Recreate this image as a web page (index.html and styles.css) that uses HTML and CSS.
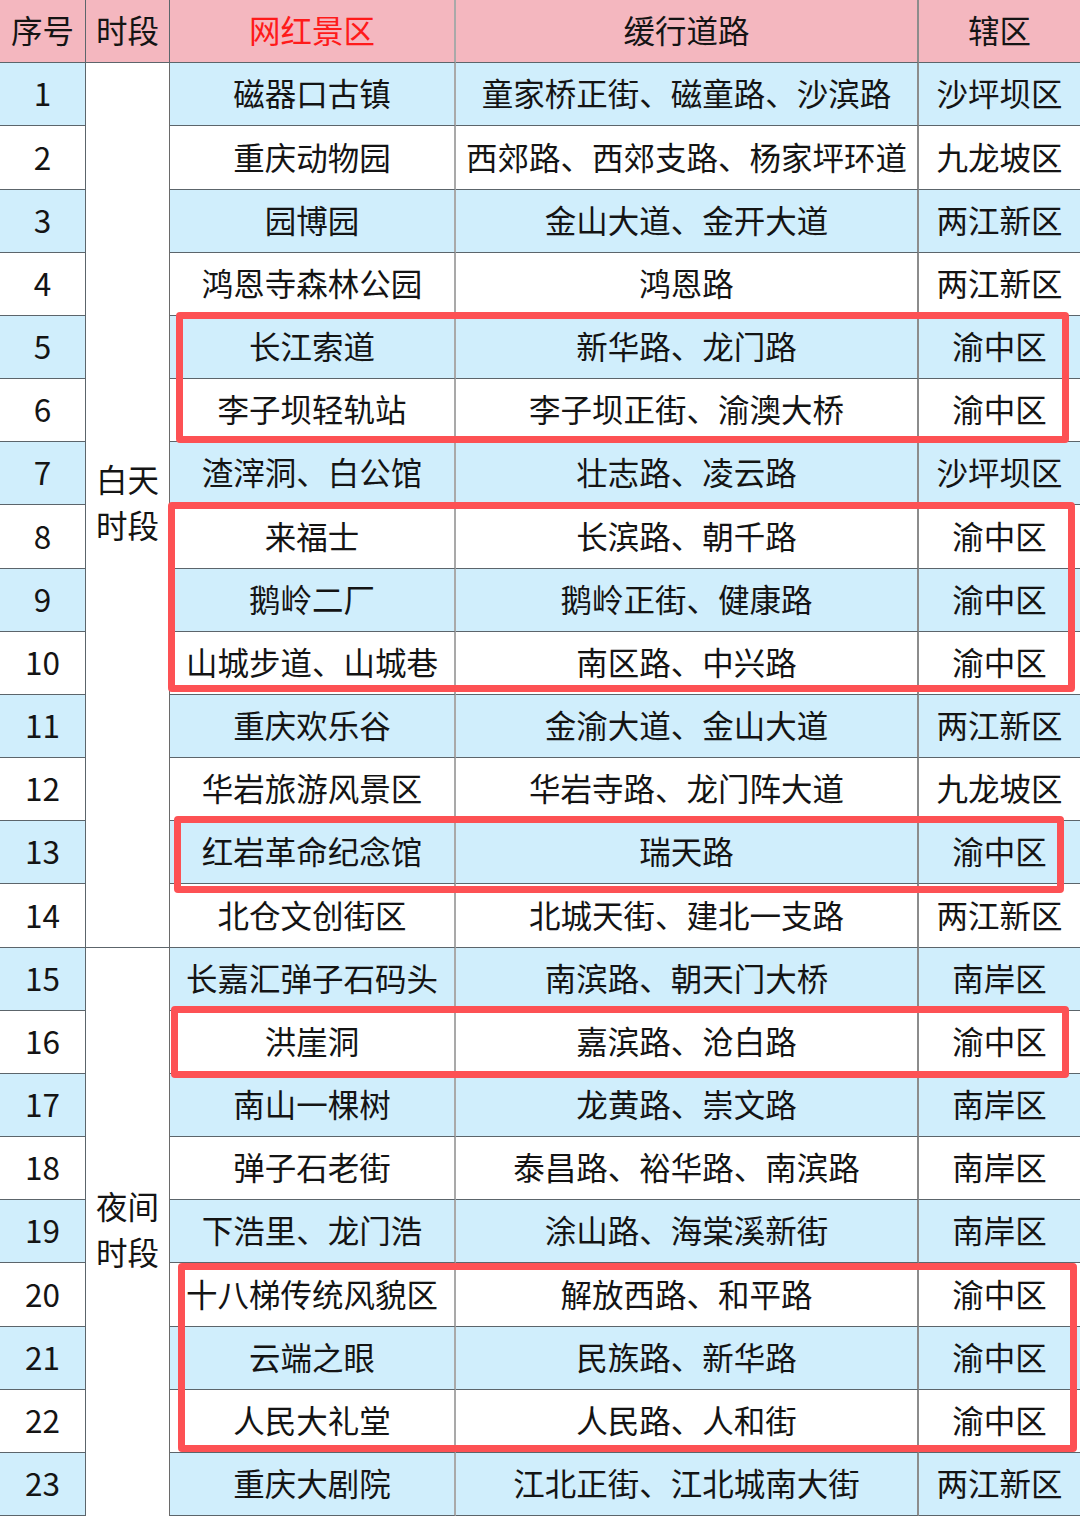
FILE: index.html
```html
<!DOCTYPE html>
<html lang="zh-CN">
<head>
<meta charset="utf-8">
<link rel="stylesheet" href="styles.css">
</head>
<body>
<div class="wrap">
  <div class="grid">
    <div class="cell head">序号</div>
    <div class="cell head">时段</div>
    <div class="cell head c3 red">网红景区</div>
    <div class="cell head c4">缓行道路</div>
    <div class="cell head c5">辖区</div>

    <div class="cell period day">白天<br>时段</div>
    <div class="cell period night">夜间<br>时段</div>

    <div class="cell b">1</div><div class="cell b c3">磁器口古镇</div><div class="cell b c4">童家桥正街、磁童路、沙滨路</div><div class="cell b c5">沙坪坝区</div>
    <div class="cell">2</div><div class="cell c3">重庆动物园</div><div class="cell c4">西郊路、西郊支路、杨家坪环道</div><div class="cell c5">九龙坡区</div>
    <div class="cell b">3</div><div class="cell b c3">园博园</div><div class="cell b c4">金山大道、金开大道</div><div class="cell b c5">两江新区</div>
    <div class="cell">4</div><div class="cell c3">鸿恩寺森林公园</div><div class="cell c4">鸿恩路</div><div class="cell c5">两江新区</div>
    <div class="cell b">5</div><div class="cell b c3">长江索道</div><div class="cell b c4">新华路、龙门路</div><div class="cell b c5">渝中区</div>
    <div class="cell">6</div><div class="cell c3">李子坝轻轨站</div><div class="cell c4">李子坝正街、渝澳大桥</div><div class="cell c5">渝中区</div>
    <div class="cell b">7</div><div class="cell b c3">渣滓洞、白公馆</div><div class="cell b c4">壮志路、凌云路</div><div class="cell b c5">沙坪坝区</div>
    <div class="cell">8</div><div class="cell c3">来福士</div><div class="cell c4">长滨路、朝千路</div><div class="cell c5">渝中区</div>
    <div class="cell b">9</div><div class="cell b c3">鹅岭二厂</div><div class="cell b c4">鹅岭正街、健康路</div><div class="cell b c5">渝中区</div>
    <div class="cell">10</div><div class="cell c3">山城步道、山城巷</div><div class="cell c4">南区路、中兴路</div><div class="cell c5">渝中区</div>
    <div class="cell b">11</div><div class="cell b c3">重庆欢乐谷</div><div class="cell b c4">金渝大道、金山大道</div><div class="cell b c5">两江新区</div>
    <div class="cell">12</div><div class="cell c3">华岩旅游风景区</div><div class="cell c4">华岩寺路、龙门阵大道</div><div class="cell c5">九龙坡区</div>
    <div class="cell b">13</div><div class="cell b c3">红岩革命纪念馆</div><div class="cell b c4">瑞天路</div><div class="cell b c5">渝中区</div>
    <div class="cell">14</div><div class="cell c3">北仓文创街区</div><div class="cell c4">北城天街、建北一支路</div><div class="cell c5">两江新区</div>
    <div class="cell b">15</div><div class="cell b c3">长嘉汇弹子石码头</div><div class="cell b c4">南滨路、朝天门大桥</div><div class="cell b c5">南岸区</div>
    <div class="cell">16</div><div class="cell c3">洪崖洞</div><div class="cell c4">嘉滨路、沧白路</div><div class="cell c5">渝中区</div>
    <div class="cell b">17</div><div class="cell b c3">南山一棵树</div><div class="cell b c4">龙黄路、崇文路</div><div class="cell b c5">南岸区</div>
    <div class="cell">18</div><div class="cell c3">弹子石老街</div><div class="cell c4">泰昌路、裕华路、南滨路</div><div class="cell c5">南岸区</div>
    <div class="cell b">19</div><div class="cell b c3">下浩里、龙门浩</div><div class="cell b c4">涂山路、海棠溪新街</div><div class="cell b c5">南岸区</div>
    <div class="cell">20</div><div class="cell c3">十八梯传统风貌区</div><div class="cell c4">解放西路、和平路</div><div class="cell c5">渝中区</div>
    <div class="cell b">21</div><div class="cell b c3">云端之眼</div><div class="cell b c4">民族路、新华路</div><div class="cell b c5">渝中区</div>
    <div class="cell">22</div><div class="cell c3">人民大礼堂</div><div class="cell c4">人民路、人和街</div><div class="cell c5">渝中区</div>
    <div class="cell b">23</div><div class="cell b c3">重庆大剧院</div><div class="cell b c4">江北正街、江北城南大街</div><div class="cell b c5">两江新区</div>
  </div>

  <div class="hl hl1"></div>
  <div class="hl hl2"></div>
  <div class="hl hl3"></div>
  <div class="hl hl4"></div>
  <div class="hl hl5"></div>
</div>
</body>
</html>
```

FILE: styles.css
```css
html, body {
  margin: 0;
  padding: 0;
  background: #ffffff;
}

.wrap {
  position: relative;
  width: 1080px;
  height: 1516px;
  overflow: hidden;
}

.grid {
  display: grid;
  grid-template-columns: 86px 84px 286px 463px 161px;
  grid-template-rows: repeat(24, 1fr);
  height: 1516px;
  font-family: "Noto Sans CJK SC", "Noto Sans", sans-serif;
  font-size: 31.5px;
  color: #141414;
}

.cell {
  box-sizing: border-box;
  display: flex;
  align-items: center;
  justify-content: center;
  white-space: nowrap;
  background: #ffffff;
  border-bottom: 1px solid #5c656b;
  border-right: 1px solid #5c656b;
  line-height: 1;
  padding-bottom: 2px;
}

.cell.b {
  background: #d0eefc;
}

.cell.head {
  background: #f4b7bf;
}

.cell.red {
  color: #ff1a1a;
}

.cell.c3 {
  border-right: 2px solid #a9a9a9;
}

.cell.c4 {
  border-right: 2px solid #8c8c8c;
}

.cell.c5 {
  border-right: 0;
}

.period {
  grid-column: 2;
  background: #ffffff;
  line-height: 1.45;
  text-align: left;
  padding: 0 0 6px 10px;
  justify-content: flex-start;
  border-right: 1px solid #6a6a6a;
}

.period.day {
  grid-row: 2 / span 14;
}

.period.night {
  grid-row: 16 / span 9;
  border-bottom: 0;
}

.hl {
  position: absolute;
  box-sizing: border-box;
  border: 7px solid #fd5154;
  border-radius: 4px;
}

.hl1 { left: 176px; top: 312px; width: 893px; height: 131px; }
.hl2 { left: 168px; top: 502px; width: 907px; height: 190px; }
.hl3 { left: 174px; top: 816px; width: 890px; height: 77px; }
.hl4 { left: 171px; top: 1006px; width: 898px; height: 72px; }
.hl5 { left: 178px; top: 1263px; width: 899px; height: 189px; }
```
